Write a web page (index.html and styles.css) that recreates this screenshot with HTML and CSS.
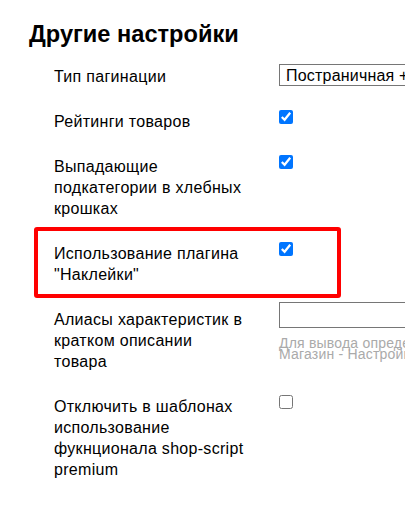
FILE: index.html
```html
<!DOCTYPE html>
<html lang="ru">
<head>
<meta charset="utf-8">
<title>Другие настройки</title>
<link rel="stylesheet" href="styles.css">
</head>
<body>
<div class="page">
  <h1 class="title">Другие настройки</h1>
  <div class="list">
    <div class="row">
      <div class="label">Тип пагинации</div>
      <div class="value">
        <select class="select">
          <option>Постраничная + подгрузка</option>
        </select>
      </div>
    </div>
    <div class="row">
      <div class="label">Рейтинги товаров</div>
      <div class="value"><input class="check" type="checkbox" checked></div>
    </div>
    <div class="row">
      <div class="label">Выпадающие подкатегории в хлебных крошках</div>
      <div class="value"><input class="check" type="checkbox" checked></div>
    </div>
    <div class="row marked">
      <div class="label">Использование плагина "Наклейки"</div>
      <div class="value"><input class="check" type="checkbox" checked></div>
    </div>
    <div class="row">
      <div class="label">Алиасы характеристик в кратком описании товара</div>
      <div class="value">
        <input class="text-input" type="text">
        <div class="hint">Для вывода определенных характеристик<br>Магазин - Настройки - Характеристики</div>
      </div>
    </div>
    <div class="row">
      <div class="label">Отключить в шаблонах использование фукнционала shop-script premium</div>
      <div class="value"><input class="check" type="checkbox"></div>
    </div>
  </div>
</div>
</body>
</html>
```

FILE: styles.css
```css
html, body {
  margin: 0;
  padding: 0;
  overflow: hidden;
  background: #fff;
}

body {
  font-family: "Liberation Sans", Arial, sans-serif;
  color: #000;
}

.page {
  padding: 20px 0 0 29px;
}

.title {
  margin: 0;
  font-size: 23.6px;
  line-height: 28px;
  font-weight: bold;
}

.list {
  margin-top: 18px;
  padding-left: 25px;
  display: flex;
  flex-direction: column;
  gap: 24px;
}

.row {
  display: flex;
  align-items: flex-start;
}

.row.marked {
  position: relative;
}

.row.marked::after {
  content: "";
  position: absolute;
  left: -20px;
  top: -16px;
  width: 307px;
  height: 71px;
  box-sizing: border-box;
  border: 4px solid #ff0000;
  border-radius: 3px;
  pointer-events: none;
}

.label {
  width: 192px;
  margin-right: 33px;
  flex: none;
  font-size: 16px;
  line-height: 21px;
  letter-spacing: 0.3px;
}

.value {
  flex: none;
  width: 220px;
}

.select {
  display: block;
  margin: -2px 0 0 0;
  width: 220px;
  height: 22px;
  padding: 0 6px;
  border: 1px solid #767676;
  border-radius: 0;
  background: #fff;
  font-family: "Liberation Sans", Arial, sans-serif;
  font-size: 16px;
  letter-spacing: 0.2px;
  color: #000;
  appearance: none;
  -webkit-appearance: none;
}

.check {
  display: block;
  margin: -1px 0 0 0;
  width: 14px;
  height: 14px;
}

.text-input {
  display: block;
  box-sizing: border-box;
  margin: -7px 0 0 0;
  width: 220px;
  height: 26px;
  padding: 0 4px;
  border: 1px solid #767676;
  border-radius: 0;
  font-family: "Liberation Sans", Arial, sans-serif;
  font-size: 16px;
}

.hint {
  margin-top: 10px;
  font-size: 14px;
  line-height: 11px;
  letter-spacing: 0.2px;
  color: #aaa;
  white-space: nowrap;
}
```
